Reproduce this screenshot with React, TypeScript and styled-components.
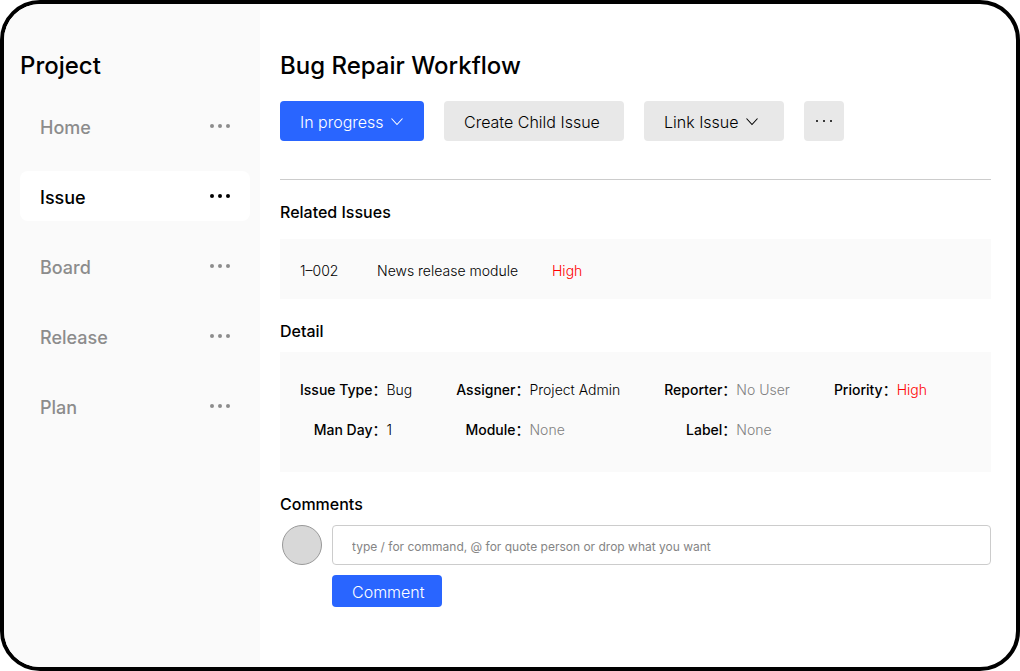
import React from "react";
import styled, { createGlobalStyle, css } from "styled-components";

const GlobalStyle = createGlobalStyle`
  *, *::before, *::after { box-sizing: border-box; }
  body {
    margin: 0;
    background: #fff;
    color: #000;
    font-family: Inter, "Noto Sans CJK SC", sans-serif;
    font-size: 14px;
  }
  h1, h2, p, ul, dl, dd { margin: 0; padding: 0; }
  button, input { font-family: inherit; }
`;

const Frame = styled.div`
  display: flex;
  min-height: 100vh;
  border: 4px solid #000;
  border-radius: 40px;
  overflow: hidden;
  background: #fff;
`;

const Sidebar = styled.aside`
  flex: 0 0 256px;
  padding: 42px 10px 20px 16px;
  background: #fafafa;
`;

const Main = styled.main`
  flex: 1;
  min-width: 0;
  padding: 42px 25px 20px 20px;
`;

const Title = styled.h1`
  font-size: 24px;
  line-height: 40px;
  font-weight: 500;
`;

const SidebarTitle = styled(Title).attrs({ as: "h2" })``;

const NavList = styled.ul`
  display: flex;
  flex-direction: column;
  gap: 20px;
  margin-top: 15px;
  list-style: none;
`;

const NavItem = styled.li<{ $active?: boolean }>`
  display: flex;
  align-items: center;
  height: 50px;
  padding: 0 19px 0 20px;
  border-radius: 8px;
  color: #8c8c8c;
  ${(p) =>
    p.$active &&
    css`
      background: #fff;
      color: #000;
    `}
`;

const NavLink = styled.a`
  flex: 1;
  padding-top: 3px;
  color: inherit;
  font-size: 18px;
  line-height: 24px;
  font-weight: 500;
  text-decoration: none;
`;

const MoreButton = styled.button`
  display: flex;
  padding: 0;
  border: 0;
  background: none;
  color: inherit;
  cursor: pointer;
`;

const Toolbar = styled.div`
  display: flex;
  gap: 20px;
  margin-top: 15px;
  padding-bottom: 38px;
  border-bottom: 1px solid #ccc;
`;

const Button = styled.button<{ $primary?: boolean; $width: number; $compact?: boolean }>`
  display: flex;
  align-items: center;
  gap: 6px;
  min-width: ${(p) => p.$width}px;
  height: ${(p) => (p.$compact ? 32 : 40)}px;
  padding: 2px 0 0 20px;
  border: 0;
  border-radius: 4px;
  background: ${(p) => (p.$primary ? "#2965ff" : "#e8e8e8")};
  color: ${(p) => (p.$primary ? "#fff" : "#000")};
  font-size: 16px;
  line-height: 24px;
  font-weight: 300;
  white-space: nowrap;
  cursor: pointer;
`;

const IconButton = styled(Button)`
  justify-content: center;
  padding: 0;
`;

const SectionTitle = styled.h2`
  font-size: 16px;
  line-height: 24px;
  font-weight: 500;
`;

const Section = styled.section`
  margin-top: 20px;
`;

const IssueTable = styled.table`
  width: 100%;
  height: 60px;
  margin-top: 15px;
  border-collapse: collapse;
  background: #fafafa;
  font-weight: 300;
`;

const Cell = styled.td<{ $width?: number; $high?: boolean }>`
  width: ${(p) => (p.$width ? `${p.$width}px` : "auto")};
  padding: 4px 0 0;
  line-height: 20px;
  white-space: nowrap;
  color: ${(p) => (p.$high ? "#f00" : "inherit")};
  &:first-child { padding-left: 20px; }
`;

const DetailList = styled.dl`
  display: grid;
  grid-template-columns: repeat(8, max-content);
  grid-auto-rows: 40px;
  align-items: center;
  margin-top: 9px;
  padding: 18px 20px 22px;
  background: #fafafa;
`;

const Term = styled.dt`
  padding-left: 44px;
  text-align: right;
  font-weight: 500;
  line-height: 20px;
  &:nth-child(8n + 1) { padding-left: 0; }
`;

const Value = styled.dd<{ $tone?: "muted" | "high" }>`
  line-height: 20px;
  font-weight: 300;
  color: ${(p) => (p.$tone === "muted" ? "#808080" : p.$tone === "high" ? "#f00" : "#000")};
`;

const CommentForm = styled.form`
  display: grid;
  grid-template-columns: 40px 1fr;
  gap: 10px;
  margin-top: 9px;
  padding-left: 2px;
`;

const Avatar = styled.div`
  width: 40px;
  height: 40px;
  border: 1px solid #999;
  border-radius: 50%;
  background: #d8d8d8;
`;

const CommentInput = styled.input`
  width: 100%;
  height: 40px;
  padding: 2px 19px 0;
  border: 1px solid #ccc;
  border-radius: 4px;
  background: #fff;
  font-size: 12px;
  &::placeholder { color: #858585; opacity: 1; }
`;

const SubmitCell = styled.div`
  grid-column: 2;
`;

function Dots({ small }: { small?: boolean }) {
  const r = small ? 1 : 2;
  const step = small ? 7 : 8;
  return (
    <svg width="22" height="6" viewBox="0 0 22 6" fill="currentColor" aria-hidden="true">
      <circle cx={11 - step} cy="3" r={r} />
      <circle cx="11" cy="3" r={r} />
      <circle cx={11 + step} cy="3" r={r} />
    </svg>
  );
}

function Chevron() {
  return (
    <svg width="14" height="10" viewBox="0 0 14 10" fill="none" stroke="currentColor" strokeWidth="1.1" aria-hidden="true">
      <path d="M1.5 1.5 7 7.5 12.5 1.5" />
    </svg>
  );
}

const pages = ["Home", "Issue", "Board", "Release", "Plan"];

const details: { term: string; value: string; tone?: "muted" | "high" }[] = [
  { term: "Issue Type", value: "Bug" },
  { term: "Assigner", value: "Project Admin" },
  { term: "Reporter", value: "No User", tone: "muted" },
  { term: "Priority", value: "High", tone: "high" },
  { term: "Man Day", value: "1" },
  { term: "Module", value: "None", tone: "muted" },
  { term: "Label", value: "None", tone: "muted" },
];

export default function App() {
  return (
    <>
      <GlobalStyle />
      <Frame>
        <Sidebar>
          <SidebarTitle>Project</SidebarTitle>
          <nav>
            <NavList>
              {pages.map((page) => (
                <NavItem key={page} $active={page === "Issue"}>
                  <NavLink href="#" aria-current={page === "Issue" ? "page" : undefined}>
                    {page}
                  </NavLink>
                  <MoreButton type="button" aria-label={`${page} options`}>
                    <Dots />
                  </MoreButton>
                </NavItem>
              ))}
            </NavList>
          </nav>
        </Sidebar>
        <Main>
          <Title>Bug Repair Workflow</Title>
          <Toolbar>
            <Button type="button" $primary $width={144}>
              In progress
              <Chevron />
            </Button>
            <Button type="button" $width={180}>Create Child Issue</Button>
            <Button type="button" $width={140}>
              Link Issue
              <Chevron />
            </Button>
            <IconButton type="button" $width={40} aria-label="More actions">
              <Dots small />
            </IconButton>
          </Toolbar>
          <Section>
            <SectionTitle>Related Issues</SectionTitle>
            <IssueTable>
              <tbody>
                <tr>
                  <Cell $width={97}>1–002</Cell>
                  <Cell $width={175}>News release module</Cell>
                  <Cell $high>High</Cell>
                </tr>
              </tbody>
            </IssueTable>
          </Section>
          <Section>
            <SectionTitle>Detail</SectionTitle>
            <DetailList>
              {details.map((d) => (
                <React.Fragment key={d.term}>
                  <Term>{d.term}：</Term>
                  <Value $tone={d.tone}>{d.value}</Value>
                </React.Fragment>
              ))}
            </DetailList>
          </Section>
          <Section>
            <SectionTitle>Comments</SectionTitle>
            <CommentForm onSubmit={(e) => e.preventDefault()}>
              <Avatar />
              <CommentInput
                type="text"
                aria-label="Comment"
                placeholder="type / for command, @ for quote person or drop what you want"
              />
              <SubmitCell>
                <Button type="submit" $primary $compact $width={110}>Comment</Button>
              </SubmitCell>
            </CommentForm>
          </Section>
        </Main>
      </Frame>
    </>
  );
}
